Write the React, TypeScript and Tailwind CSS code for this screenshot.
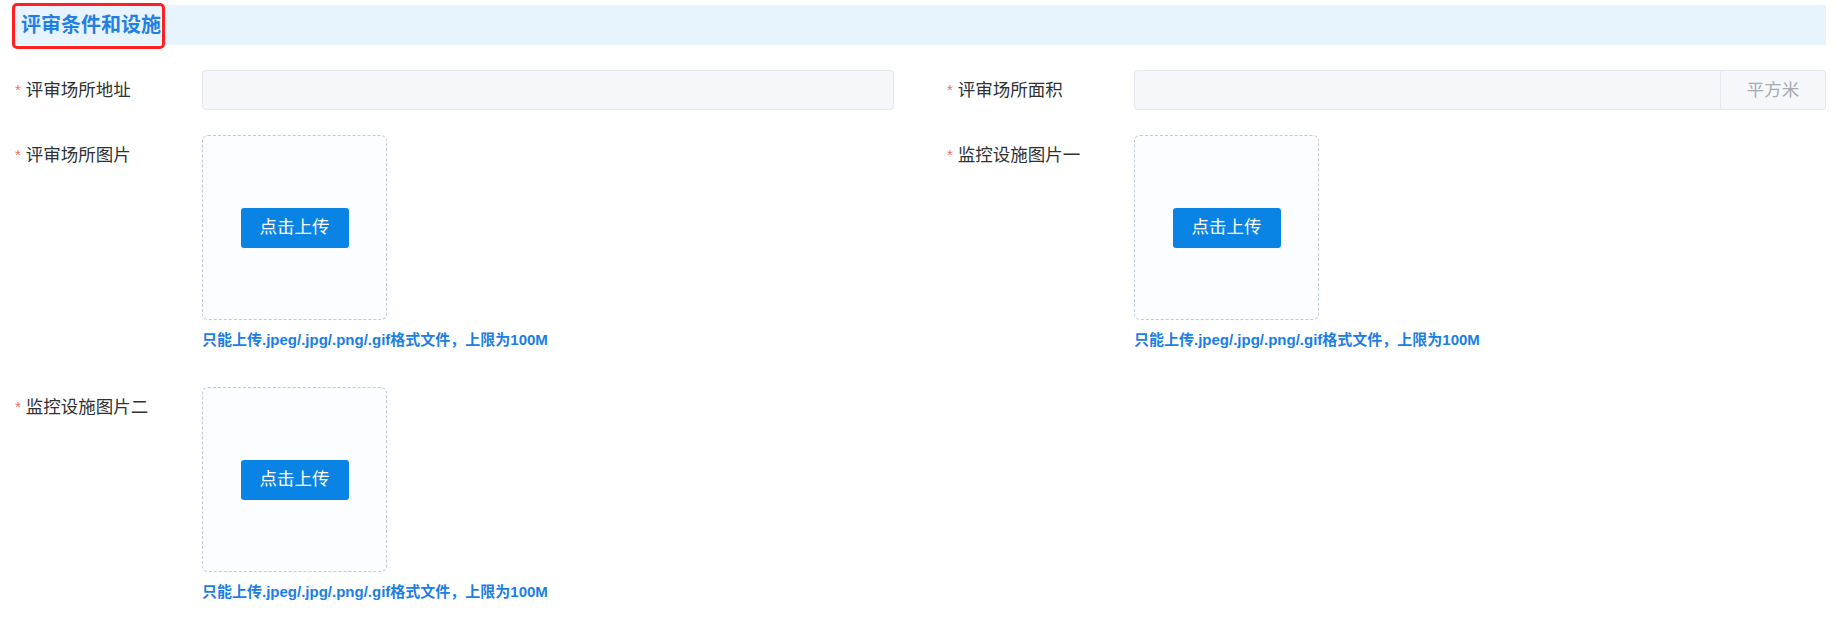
const FONT = { fontFamily: '"Liberation Sans", "Noto Sans CJK SC", sans-serif' };

const HINT = "只能上传.jpeg/.jpg/.png/.gif格式文件，上限为100M";

function Label({ text }: { text: string }) {
  return (
    <div className="flex h-[40px] w-[190px] shrink-0 items-center pl-[3px] text-[17.5px] text-[#303133]">
      <span className="mr-[5px] text-[15px] text-[#f56c6c]">*</span>
      {text}
    </div>
  );
}

function Upload() {
  return (
    <div>
      <div className="flex h-[185px] w-[185px] items-center justify-center rounded-[6px] border border-dashed border-[#c0ccda] bg-[#fbfdff]">
        <button className="h-[40px] w-[108px] rounded-[3px] bg-[#0a84e4] text-[17.5px] text-white">点击上传</button>
      </div>
      <div className="mt-[10px] text-[15px] leading-[20px] font-bold text-[#1a7ee6]">{HINT}</div>
    </div>
  );
}

export default function App() {
  return (
    <div className="w-[1842px] bg-white pt-[5px] pl-[12px] pr-[16px]" style={FONT}>
      {/* section title */}
      <div className="relative flex h-[40px] items-center bg-[#e8f4fd] pl-[9px]">
        <span className="text-[20px] font-bold text-[#2380e3]">评审条件和设施</span>
        <div className="absolute -top-[2px] left-0 h-[46px] w-[153px] rounded-[5px] border-[3px] border-[#ff2020]" />
      </div>

      <div className="mt-[25px] grid grid-cols-2 items-start gap-x-[50px]">
        <div className="flex items-start">
          <Label text="评审场所地址" />
          <div className="h-[40px] flex-1 rounded-[4px] border border-[#e4e7ed] bg-[#f5f7fa]" />
        </div>
        <div className="flex items-start">
          <Label text="评审场所面积" />
          <div className="flex h-[40px] flex-1">
            <div className="flex-1 rounded-l-[4px] border border-[#e4e7ed] bg-[#f5f7fa]" />
            <div className="flex w-[105px] items-center justify-center rounded-r-[4px] border border-l-0 border-[#e4e7ed] bg-[#f5f7fa] text-[17.5px] text-[#a8abb2]">
              平方米
            </div>
          </div>
        </div>

        <div className="mt-[25px] flex items-start">
          <Label text="评审场所图片" />
          <Upload />
        </div>
        <div className="mt-[25px] flex items-start">
          <Label text="监控设施图片一" />
          <Upload />
        </div>

        <div className="mt-[37px] flex items-start">
          <Label text="监控设施图片二" />
          <Upload />
        </div>
      </div>
    </div>
  );
}
